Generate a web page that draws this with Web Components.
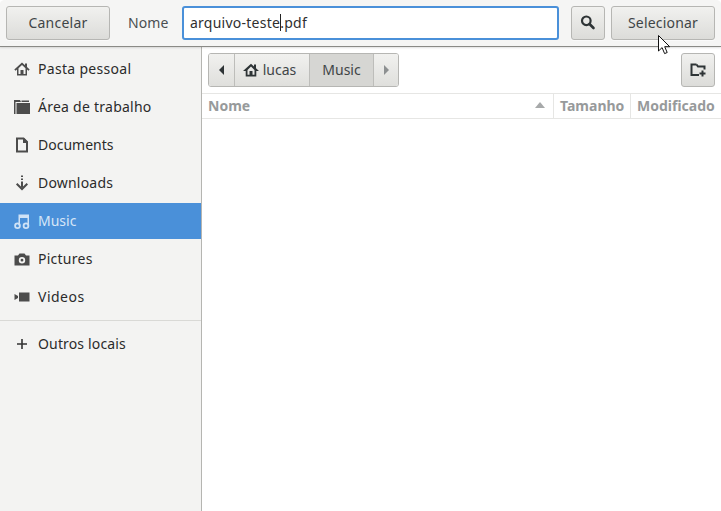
<!DOCTYPE html>
<html>
<head>
<meta charset="utf-8">
<style>
  html, body { margin: 0; padding: 0; background: #fff; }
  body { font: 14px "Noto Sans", sans-serif; }
</style>
</head>
<body>
<file-dialog>
  <dlg-button slot="start" style="width:104px;letter-spacing:.25px">Cancelar</dlg-button>
  <name-entry slot="start" label="Nome" value-a="arquivo-teste" value-b=".pdf"></name-entry>
  <dlg-button slot="end" style="width:34px">
    <svg width="16" height="16" viewBox="0 0 16 16"><circle cx="6.300" cy="6.800" r="4.300" fill="none" stroke="#2e3436" stroke-width="2.200"/><path d="M9.500 10l4 4" stroke="#2e3436" stroke-width="2.600" stroke-linecap="round"/></svg>
  </dlg-button>
  <dlg-button slot="end" style="width:104px;letter-spacing:.2px">Selecionar</dlg-button>

  <place-row slot="places" label="Pasta pessoal" style="letter-spacing:.3px">
    <svg viewBox="0 0 16 16"><path fill-rule="evenodd" d="M8 1.500L.3 8.500l1.200 1.200L3 8.400V14.500h10V8.400l1.500 1.300 1.200-1.200L13 6V2.500h-2v1.700zM8 4l3.500 3.200V13H9.500V9h-3v4H4.500V7.200z" fill="#4c4c4c"/></svg>
  </place-row>
  <place-row slot="places" label="Área de trabalho" style="letter-spacing:.25px">
    <svg viewBox="0 0 16 16"><path d="M0 1h6l1 2H1.500v12H0zM2.500 4H16v11H2.500zM7.500 1.500H15V3H7.500z" fill="#4c4c4c"/></svg>
  </place-row>
  <place-row slot="places" label="Documents">
    <svg viewBox="0 0 16 16"><path d="M3 1.500h6.500L13 5v9.500H3z" fill="none" stroke="#4c4c4c" stroke-width="2"/><path d="M9 1h1l4 4v1H9z" fill="#4c4c4c"/></svg>
  </place-row>
  <place-row slot="places" label="Downloads" style="letter-spacing:.2px">
    <svg viewBox="0 0 16 16"><path d="M7 .500h2V2H7zM7 3.500h2V5H7zM7 6.500h2v6H7z" fill="#4c4c4c"/><path d="M2.700 8.800L8 14l5.300-5.200" fill="none" stroke="#4c4c4c" stroke-width="2"/></svg>
  </place-row>
  <place-row slot="places" label="Music" selected>
    <svg viewBox="0 0 16 16"><path d="M4.500 1.500h10.500v11h-1.500V5h-7.500v7.500H4.500z" fill="#cfe2f6"/><circle cx="3.500" cy="12.700" r="2.400" fill="none" stroke="#cfe2f6" stroke-width="1.800"/><circle cx="12" cy="12.700" r="2.400" fill="none" stroke="#cfe2f6" stroke-width="1.800"/></svg>
  </place-row>
  <place-row slot="places" label="Pictures" style="letter-spacing:.25px">
    <svg viewBox="0 0 16 16"><path fill-rule="evenodd" d="M5.500 2.500h5L12 4.500h3.500v10H.5v-10H4zM8 6a3.200 3.200 0 100 6.400A3.200 3.200 0 008 6zm0 1.800a1.400 1.400 0 110 2.800 1.400 1.400 0 010-2.800z" fill="#4c4c4c"/></svg>
  </place-row>
  <place-row slot="places" label="Videos" style="letter-spacing:.5px">
    <svg viewBox="0 0 16 16"><path d="M5 3.500h10.500v9H5zM.5 5L4 7v2L.5 11z" fill="#4c4c4c"/></svg>
  </place-row>
  <hr-line slot="places"></hr-line>
  <place-row slot="places" label="Outros locais" style="letter-spacing:.15px">
    <svg viewBox="0 0 16 16"><path d="M7.200 3h1.600v4.200H13v1.600H8.800V13H7.200V8.800H3V7.200h4.200z" fill="#333"/></svg>
  </place-row>

  <path-bar slot="toolbar">
    <path-seg style="width:26px"><svg width="6" height="10" viewBox="0 0 6 10"><path d="M5 0v10L0 5z" fill="#2e3436"/></svg></path-seg>
    <path-seg style="width:75px;padding-right:5px;gap:4px">
      <svg width="16" height="16" viewBox="0 0 16 16"><path fill-rule="evenodd" d="M8 1.800L0 9h2.700v5.500h10.600V9H16l-3-2.700V2.500h-2v2zM8 4.500L11.500 8v4.800h-2V9h-3v3.800h-2V8z" fill="#2e3436"/></svg><span>lucas</span>
    </path-seg>
    <path-seg active style="width:64px"><span>Music</span></path-seg>
    <path-seg last style="width:24px;padding-left:1px"><svg width="6" height="10" viewBox="0 0 6 10"><path d="M0 0v10l5-5z" fill="#8d9091"/></svg></path-seg>
  </path-bar>
  <dlg-button slot="toolbar" style="width:34px">
    <svg width="16" height="16" viewBox="0 0 16 16"><path d="M6.500 3.500l1.500 2h6.500v3M9 14H1.500V3.500h5" fill="none" stroke="#2e3436" stroke-width="2"/><path d="M11.500 9.500h2v2h2v2h-2v2h-2v-2h-2v-2h2z" fill="#2e3436"/></svg>
  </dlg-button>

  <list-head slot="list"></list-head>
</file-dialog>

<script>
class FileDialog extends HTMLElement {
  constructor() {
    super();
    this.attachShadow({ mode: "open" }).innerHTML = `
      <style>
        :host { display: block; position: relative; width: 721px; height: 511px; overflow: hidden; background: #fff; color: #3d3d3d; }
        header { box-sizing: border-box; height: 47px; padding: 6px; display: flex; justify-content: space-between;
          background: #f5f5f4; border-bottom: 1px solid #8a8a86; border-radius: 5px 5px 0 0;
          box-shadow: 0 1px 2px rgba(0,0,0,.12); position: relative; }
        .group { display: flex; gap: 6px; }
        .main { display: flex; height: 464px; }
        aside { box-sizing: border-box; width: 202px; padding-top: 4px; display: flex; flex-direction: column; gap: 2px;
          background: #f3f3f2; border-right: 1px solid #b5b5b1; }
        section { flex: 1; min-width: 0; }
        .toolbar { box-sizing: border-box; height: 46px; padding: 6px 6px 0; display: flex; justify-content: space-between; }
        .cursor { position: absolute; left: 658px; top: 35px; }
      </style>
      <header>
        <div class="group"><slot name="start"></slot></div>
        <div class="group"><slot name="end"></slot></div>
      </header>
      <div class="main">
        <aside><slot name="places"></slot></aside>
        <section>
          <div class="toolbar"><slot name="toolbar"></slot></div>
          <slot name="list"></slot>
        </section>
      </div>
      <svg class="cursor" width="13" height="20" viewBox="0 0 13 20"><path d="M.5.500v15.500l3.600-3.400 2.500 6 2.600-1.100-2.500-5.800h5z" fill="#fff" stroke="#111" stroke-width="1" stroke-linejoin="round"/></svg>`;
  }
}

class DlgButton extends HTMLElement {
  constructor() {
    super();
    this.attachShadow({ mode: "open" }).innerHTML = `
      <style>
        :host { display: flex; align-items: center; justify-content: center; box-sizing: border-box; height: 34px; padding-bottom: 2px;
          border: 1px solid #b6b6b3; border-radius: 3px; background: linear-gradient(#f1f1ef, #dcdcd9);
          box-shadow: 0 1px 1px rgba(255,255,255,.6); color: #3f4547; font-size: 14px; }
      </style><slot></slot>`;
  }
}

class NameEntry extends HTMLElement {
  constructor() {
    super();
    this.attachShadow({ mode: "open" }).innerHTML = `
      <style>
        :host { display: flex; align-items: center; font-size: 14px; }
        .label { width: 66px; box-sizing: border-box; padding: 0 0 2px 12px; color: #4a4f51; letter-spacing: .1px; }
        .entry { box-sizing: border-box; width: 377px; height: 34px; padding: 0 6px 2px; display: flex; align-items: center;
          border: 2px solid #4a90d9; border-radius: 3px; background: #fff; color: #2f2f2f; letter-spacing: .25px; }
        .caret { display: inline-block; width: 1px; height: 17px; background: #222; margin-right: -1px; }
      </style>
      <span class="label"></span>
      <div class="entry"><span class="a"></span><i class="caret"></i><span class="b"></span></div>`;
  }
  connectedCallback() {
    const root = this.shadowRoot;
    root.querySelector(".label").textContent = this.getAttribute("label");
    root.querySelector(".a").textContent = this.getAttribute("value-a");
    root.querySelector(".b").textContent = this.getAttribute("value-b");
  }
}

class PlaceRow extends HTMLElement {
  constructor() {
    super();
    this.attachShadow({ mode: "open" }).innerHTML = `
      <style>
        :host { display: flex; align-items: center; box-sizing: border-box; height: 36px; flex: none; padding-left: 14px; gap: 8px; color: #2b2b2b; font-size: 14px; }
        :host([selected]) { background: #4a90d9; color: #d6e6f7; }
        ::slotted(svg) { width: 16px; height: 16px; flex: none; }
        span { padding-bottom: 2px; }
      </style>
      <slot></slot><span></span>`;
  }
  connectedCallback() {
    this.shadowRoot.querySelector("span").textContent = this.getAttribute("label");
  }
}

class HrLine extends HTMLElement {
  constructor() {
    super();
    this.attachShadow({ mode: "open" }).innerHTML = `
      <style>:host { display: block; height: 1px; flex: none; margin: 3px 0; background: #d9d9d6; }</style>`;
  }
}

class PathBar extends HTMLElement {
  constructor() {
    super();
    this.attachShadow({ mode: "open" }).innerHTML = `
      <style>
        :host { display: flex; box-sizing: border-box; height: 34px; border: 1px solid #b6b6b3; border-radius: 3px; overflow: hidden; }
      </style><slot></slot>`;
  }
}

class PathSeg extends HTMLElement {
  constructor() {
    super();
    this.attachShadow({ mode: "open" }).innerHTML = `
      <style>
        :host { display: flex; align-items: center; justify-content: center; gap: 2px; box-sizing: border-box; height: 100%;
          border-right: 1px solid #bdbdba; background: linear-gradient(#f1f1ef, #dfdfdc); color: #3f4547; font-size: 14px; }
        :host([active]) { background: #d6d6d3; }
        :host([last]) { border-right: 0; }
        ::slotted(span) { padding-bottom: 2px; }
      </style><slot></slot>`;
  }
}

class ListHead extends HTMLElement {
  constructor() {
    super();
    this.attachShadow({ mode: "open" }).innerHTML = `
      <style>
        :host { display: grid; grid-template-columns: 352px 77px 1fr; box-sizing: border-box; height: 26px; color: #979a9b;
          font-size: 14px; font-weight: 700; border-top: 1px solid #e6e6e4; border-bottom: 1px solid #e6e6e4; }
        div { display: flex; align-items: center; justify-content: space-between; padding: 0 6px 2px; white-space: nowrap; border-right: 1px solid #e6e6e4; }
        div:last-child { border: 0; }
        i { width: 0; height: 0; border: 5px solid transparent; border-top: 0; border-bottom: 6px solid #a7a9aa; margin-right: 2px; }
      </style>
      <div>Nome<i></i></div><div>Tamanho</div><div>Modificado</div>`;
  }
}

customElements.define("file-dialog", FileDialog);
customElements.define("dlg-button", DlgButton);
customElements.define("name-entry", NameEntry);
customElements.define("place-row", PlaceRow);
customElements.define("hr-line", HrLine);
customElements.define("path-bar", PathBar);
customElements.define("path-seg", PathSeg);
customElements.define("list-head", ListHead);
</script>
</body>
</html>
